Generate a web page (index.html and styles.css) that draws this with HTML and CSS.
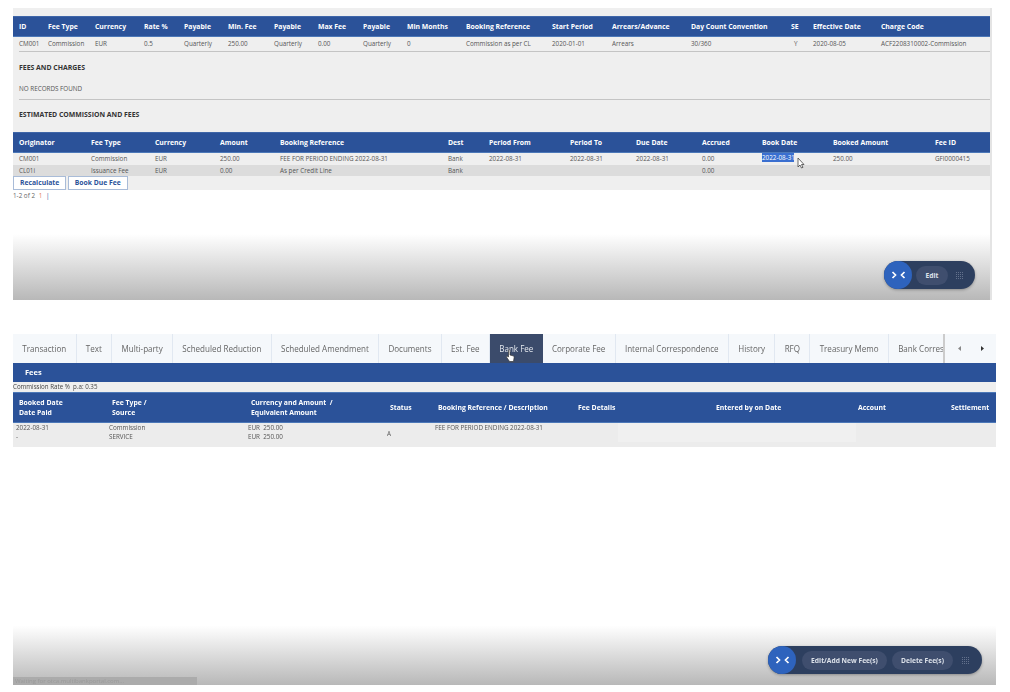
FILE: index.html
```html
<!DOCTYPE html>
<html lang="en">

<head>
    <meta charset="UTF-8">
    <meta name="viewport" content="width=device-width, initial-scale=1.0">
    <title>Bank Fee</title>

    <link rel="stylesheet" href="styles.css">

</head>

<body>
    <div class="pageWrap">

        <!-- estimated fee screen -->
        <div class="feeScreen">
            <div class="greyPanel">
                <div class="gridRow termsCols headRow">
                    <div>ID</div>
                    <div>Fee Type</div>
                    <div>Currency</div>
                    <div>Rate %</div>
                    <div>Payable</div>
                    <div>Min. Fee</div>
                    <div>Payable</div>
                    <div>Max Fee</div>
                    <div>Payable</div>
                    <div>Min Months</div>
                    <div>Booking Reference</div>
                    <div>Start Period</div>
                    <div>Arrears/Advance</div>
                    <div>Day Count Convention</div>
                    <div>SE</div>
                    <div>Effective Date</div>
                    <div>Charge Code</div>
                </div>
                <div class="gridRow termsCols termsRow">
                    <div>CM001</div>
                    <div>Commission</div>
                    <div>EUR</div>
                    <div>0.5</div>
                    <div>Quarterly</div>
                    <div>250.00</div>
                    <div>Quarterly</div>
                    <div>0.00</div>
                    <div>Quarterly</div>
                    <div>0</div>
                    <div>Commission as per CL</div>
                    <div>2020-01-01</div>
                    <div>Arrears</div>
                    <div>30/360</div>
                    <div class="seCell">Y</div>
                    <div>2020-08-05</div>
                    <div>ACF2208310002-Commission</div>
                </div>

                <div class="sectionTitle firstTitle">FEES AND CHARGES</div>
                <div class="noRecords">NO RECORDS FOUND</div>
                <div class="sectionTitle secondTitle">ESTIMATED COMMISSION AND FEES</div>

                <div class="gridRow estCols headRow">
                    <div>Originator</div>
                    <div>Fee Type</div>
                    <div>Currency</div>
                    <div>Amount</div>
                    <div>Booking Reference</div>
                    <div>Dest</div>
                    <div>Period From</div>
                    <div>Period To</div>
                    <div>Due Date</div>
                    <div>Accrued</div>
                    <div>Book Date</div>
                    <div>Booked Amount</div>
                    <div>Fee ID</div>
                </div>
                <div class="gridRow estCols estRow">
                    <div>CM001</div>
                    <div>Commission</div>
                    <div>EUR</div>
                    <div>250.00</div>
                    <div>FEE FOR PERIOD ENDING 2022-08-31</div>
                    <div>Bank</div>
                    <div>2022-08-31</div>
                    <div>2022-08-31</div>
                    <div>2022-08-31</div>
                    <div>0.00</div>
                    <div class="selectedCell">
                        <span class="selectedText">2022-08-31</span>
                        <svg class="arrowCursor" width="8" height="12" viewBox="0 0 8 12">
                            <path d="M1 1v9l2-2 1.500 3 1.500-.7L4.500 7.500H7z" fill="#fff" stroke="#444" stroke-width=".8" />
                        </svg>
                    </div>
                    <div>250.00</div>
                    <div>GFI0000415</div>
                </div>
                <div class="gridRow estCols estRow altRow">
                    <div>CL01i</div>
                    <div>Issuance Fee</div>
                    <div>EUR</div>
                    <div>0.00</div>
                    <div>As per Credit Line</div>
                    <div>Bank</div>
                    <div></div>
                    <div></div>
                    <div></div>
                    <div>0.00</div>
                    <div></div>
                    <div></div>
                    <div></div>
                </div>
                <div class="buttonRow">
                    <div class="outlineBtn">Recalculate</div>
                    <div class="outlineBtn">Book Due Fee</div>
                </div>
            </div>

            <div class="fadeFooter topFooter">
                <div class="pager">1-2 of 2 <span class="pagerCurrent">1</span> <span class="pagerBar">|</span></div>
                <div class="actionPill">
                    <div class="pillToggle">
                        <svg width="15" height="8" viewBox="0 0 15 8">
                            <path d="M1.500 1l3 3-3 3M13.500 1l-3 3 3 3" fill="none" stroke="#fff" stroke-width="1.700" />
                        </svg>
                    </div>
                    <div class="pillBtn editBtn">Edit</div>
                    <svg class="pillDots" width="7" height="7" viewBox="0 0 7 7">
                        <path d="M0 .5h7M0 2.500h7M0 4.500h7M0 6.500h7M.5 0v7M2.500 0v7M4.500 0v7M6.500 0v7" stroke="#64728c" stroke-width=".9" stroke-dasharray="1 1" />
                    </svg>
                </div>
            </div>
        </div>

        <!-- bank fee tab -->
        <div class="bankScreen">
            <div class="tabBar">
                <div class="tabList">
                    <div class="tab">Transaction</div>
                    <div class="tab">Text</div>
                    <div class="tab">Multi-party</div>
                    <div class="tab">Scheduled Reduction</div>
                    <div class="tab">Scheduled Amendment</div>
                    <div class="tab">Documents</div>
                    <div class="tab">Est. Fee</div>
                    <div class="tab activeTab">Bank Fee
                        <svg class="handCursor" width="9" height="14" viewBox="0 0 9 14">
                            <path d="M2.500 1.500c0-1 1.500-1 1.500 0V6l3 .8c1 .3 1.300 1 1.100 2L7.500 12.500h-4L.8 8.500c-.6-1 .5-1.700 1.200-1l.5.6z" fill="#fff" stroke="#333" stroke-width=".7" />
                        </svg>
                    </div>
                    <div class="tab">Corporate Fee</div>
                    <div class="tab">Internal Correspondence</div>
                    <div class="tab">History</div>
                    <div class="tab">RFQ</div>
                    <div class="tab">Treasury Memo</div>
                    <div class="tab">Bank Correspondence</div>
                </div>
                <div class="tabArrows">
                    <svg width="4" height="5" viewBox="0 0 4 5"><path d="M3 0v5L0 2.500z" fill="#888" /></svg>
                    <svg width="4" height="5" viewBox="0 0 4 5"><path d="M1 0v5l3-2.500z" fill="#333" /></svg>
                </div>
            </div>
            <div class="feesBar">Fees</div>
            <div class="rateLine">Commission Rate % &nbsp;p.a: 0.35</div>
            <div class="gridRow bankCols bankHead">
                <div>Booked Date<br>Date Paid</div>
                <div>Fee Type /<br>Source</div>
                <div>Currency and Amount &nbsp;/<br>Equivalent Amount</div>
                <div>Status</div>
                <div>Booking Reference / Description</div>
                <div>Fee Details</div>
                <div>Entered by on Date</div>
                <div>Account</div>
                <div>Settlement</div>
            </div>
            <div class="gridRow bankCols bankRow">
                <div>2022-08-31<br>-</div>
                <div>Commission<br>SERVICE</div>
                <div>EUR &nbsp;250.00<br>EUR &nbsp;250.00</div>
                <div class="statusCell">A</div>
                <div>FEE FOR PERIOD ENDING 2022-08-31</div>
                <div></div>
                <div class="enteredCell"></div>
                <div></div>
                <div></div>
            </div>

            <div class="fadeFooter bottomFooter">
                <div class="statusHint">Waiting for otca.multibankportal.com...</div>
                <div class="actionPill">
                    <div class="pillToggle">
                        <svg width="15" height="8" viewBox="0 0 15 8">
                            <path d="M1.500 1l3 3-3 3M13.500 1l-3 3 3 3" fill="none" stroke="#fff" stroke-width="1.700" />
                        </svg>
                    </div>
                    <div class="pillBtn addBtn">Edit/Add New Fee(s)</div>
                    <div class="pillBtn deleteBtn">Delete Fee(s)</div>
                    <svg class="pillDots" width="7" height="7" viewBox="0 0 7 7">
                        <path d="M0 .5h7M0 2.500h7M0 4.500h7M0 6.500h7M.5 0v7M2.500 0v7M4.500 0v7M6.500 0v7" stroke="#64728c" stroke-width=".9" stroke-dasharray="1 1" />
                    </svg>
                </div>
            </div>
        </div>
    </div>
</body>

</html>
```
FILE: styles.css
```css
* {
    box-sizing: border-box;
}

html,
body {
    margin: 0;
    background-color: #fff;
}

.pageWrap {
    height: 692px;
    overflow: hidden;
    padding: 8px 0 0 13px;
    font-family: "Open Sans", sans-serif;
    font-size: 6.3px;
    color: #555;
    filter: blur(0.4px);
}

/* shared rows */

.gridRow {
    display: grid;
    padding-left: 6px;
}

.termsCols {
    grid-template-columns: 29px 47px 49px 40px 44px 46px 44px 45px 44px 59px 86px 60px 79px 100px 22px 68px 1fr;
}

.estCols {
    grid-template-columns: 72px 64px 65px 60px 168px 41px 81px 66px 66px 60px 71px 102px 1fr;
}

.bankCols {
    grid-template-columns: 93px 139px 139px 48px 140px 138px 142px 93px 1fr;
}

.headRow {
    height: 21px;
    align-items: center;
    padding-bottom: 1px;
    background-color: #2b5299;
    border-top: 1px solid #3f66a8;
    border-bottom: 1px solid #4c78b8;
    color: #fff;
    font-size: 6.85px;
    font-weight: 700;
}

/* estimated fee screen */

.feeScreen {
    width: 979px;
    border-right: 2px solid #e4e4e4;
}

.greyPanel {
    height: 182px;
    padding-top: 8px;
    background-color: #efefef;
}

.termsRow {
    height: 15px;
    align-items: center;
    margin-left: 6px;
    padding-left: 0;
    padding-bottom: 2px;
    border-bottom: 1px solid #c4c4c4;
}

.seCell {
    padding-left: 3px;
}

.sectionTitle {
    margin-left: 6px;
    color: #333;
    font-size: 6.9px;
    font-weight: 700;
    line-height: 10px;
}

.firstTitle {
    margin-top: 11px;
}

.noRecords {
    margin: 11px 0 0 6px;
    padding-bottom: 5px;
    border-bottom: 1px solid #c4c4c4;
    line-height: 10px;
}

.secondTitle {
    margin-top: 10px;
    margin-bottom: 12px;
}

.estRow {
    height: 12px;
    align-items: center;
    padding-bottom: 1px;
}

.altRow {
    height: 11px;
    padding-bottom: 0;
    background-color: #dcdcdc;
}

.selectedCell {
    position: relative;
}

.selectedText {
    display: inline-block;
    width: 32px;
    background-color: #3a6fd0;
    color: #fff;
    line-height: 9px;
    white-space: nowrap;
    overflow: hidden;
}

.arrowCursor {
    position: absolute;
    top: 4px;
    left: 35px;
}

.buttonRow {
    display: flex;
    gap: 1.5px;
}

.outlineBtn {
    height: 14px;
    padding: 0 6px;
    border: 1px solid #a9bcd8;
    background-color: #fff;
    color: #2b5299;
    font-size: 6.8px;
    font-weight: 700;
    line-height: 12px;
}

/* footers */

.fadeFooter {
    display: flex;
    background-image: linear-gradient(#fff 40%, #b8b8b8);
}

.topFooter {
    height: 110px;
    flex-direction: column;
}

.pager {
    padding-top: 1px;
    line-height: 10px;
    color: #666;
}

.pagerCurrent {
    color: #e2775a;
    margin: 0 2px;
}

.pagerBar {
    color: #2b5299;
}

.topFooter .actionPill {
    margin: auto 15px 11px auto;
}

.bottomFooter {
    height: 238px;
    justify-content: space-between;
    align-items: flex-end;
    background-image: linear-gradient(#fff 75%, #b8b8b8);
}

.bottomFooter .actionPill {
    margin: 0 14px 11px 0;
}

.bottomFooter .pillDots {
    margin: 0 13px 0 9px;
}

.statusHint {
    width: 184px;
    height: 8px;
    padding-left: 2px;
    background-color: #ababab;
    color: #999;
    font-size: 6px;
    line-height: 8px;
    white-space: nowrap;
}

.actionPill {
    display: flex;
    align-items: center;
    height: 28px;
    border-radius: 14px;
    background-color: #2d3f5f;
    box-shadow: 0 1px 3px rgba(0, 0, 0, 0.3);
    color: #dde2ea;
    font-size: 6.7px;
    font-weight: 700;
}

.pillToggle {
    display: flex;
    align-items: center;
    justify-content: center;
    width: 28px;
    height: 28px;
    border-radius: 50%;
    background-color: #2e63bd;
}

.pillBtn {
    height: 19px;
    margin-left: 4px;
    border-radius: 10px;
    background-color: #3f4e6e;
    line-height: 19px;
    text-align: center;
}

.editBtn {
    width: 32px;
}

.addBtn {
    width: 85px;
    margin-left: 6px;
}

.deleteBtn {
    width: 61px;
    margin-left: 5px;
}

.pillDots {
    margin: 0 12px 0 8px;
}

/* bank fee tab */

.bankScreen {
    width: 983px;
    margin-top: 34px;
}

.tabBar {
    display: flex;
    height: 29px;
    background-color: #f5f8fb;
}

.tabList {
    display: flex;
    flex: 0 0 932px;
    overflow: hidden;
    border-right: 2px solid #ccc;
}

.tab {
    position: relative;
    flex-shrink: 0;
    padding: 0 9.3px;
    border-right: 1px solid #e1e8f1;
    color: #666;
    font-size: 8.05px;
    line-height: 30px;
    white-space: nowrap;
}

.activeTab {
    border-right: 0;
    background-color: #3b4b6b;
    color: #e4e8ee;
}

.handCursor {
    position: absolute;
    top: 15px;
    left: 16px;
}

.tabArrows {
    display: flex;
    flex: 1;
    align-items: center;
    justify-content: space-between;
    padding: 0 12px 0 13px;
}

.feesBar {
    height: 19px;
    padding-left: 12px;
    background-color: #2b5299;
    color: #fff;
    font-size: 7.5px;
    font-weight: 700;
    line-height: 19px;
}

.rateLine {
    height: 10px;
    background-color: #efefef;
    color: #444;
    font-size: 6.2px;
    line-height: 10px;
}

.bankHead {
    height: 31px;
    align-items: center;
    padding-left: 6px;
    background-color: #2b5299;
    border-top: 1px solid #4c78b8;
    border-bottom: 1px solid #4c78b8;
    color: #fff;
    font-size: 6.85px;
    font-weight: 700;
    line-height: 10px;
}

.bankRow {
    height: 24px;
    padding-left: 3px;
    background-color: #ececec;
    line-height: 9px;
}

.statusCell {
    padding-top: 6px;
}

.enteredCell {
    height: 19px;
    margin-left: -95px;
    margin-right: -1px;
    background-color: #f0f0f0;
}
```
